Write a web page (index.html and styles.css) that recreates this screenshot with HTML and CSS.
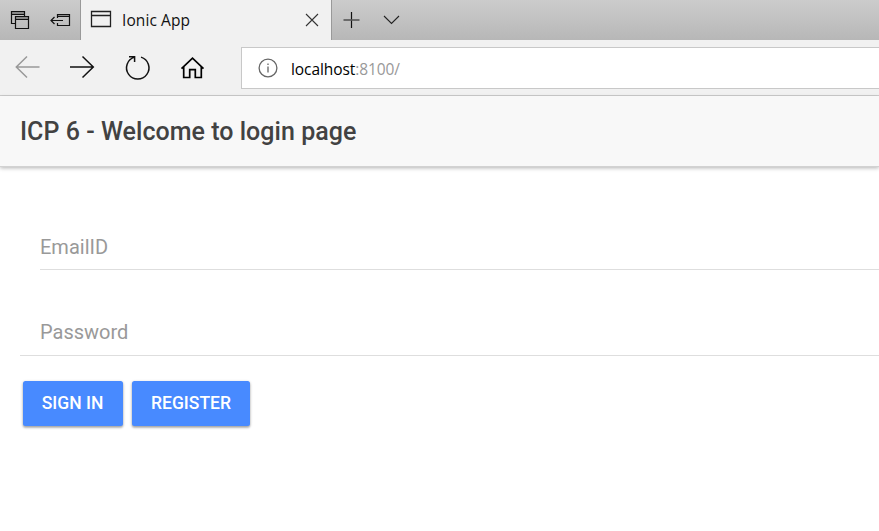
FILE: index.html
```html
<!DOCTYPE html>
<html lang="en">
<head>
<meta charset="utf-8">
<title>Ionic App</title>
<link rel="stylesheet" href="styles.css">
</head>
<body>
<div class="tabs">
  <div class="tab-tools">
    <svg class="icon" width="80" height="40" viewBox="0 0 80 40">
      <path class="shade" d="M12 13H24M16 18H28"/>
      <path d="M15 23.500H11.500V11.500H24.500V16M11.500 14.500H24.500"/>
      <path d="M15.500 16.500H28.500V28.500H15.500ZM15.500 19.500H28.500"/>
      <path class="shade" d="M57 15.500H69"/>
      <path d="M57.500 18V14.500H69.500V25.500H57.500V23M57.500 16.500H69.500M51 20.500H63M54.500 17L51 20.500L54.500 24"/>
    </svg>
  </div>
  <div class="tab">
    <svg class="icon frame-icon" width="20" height="17" viewBox="0 0 20 17"><path class="frame" d="M.5 .5H19.500V15.500H.5ZM.5 4.500H19.500"/></svg>
    <span class="tab-title">Ionic App</span>
    <svg class="icon close" width="14" height="14" viewBox="0 0 14 14"><path d="M1 1L13 13M13 1L1 13"/></svg>
  </div>
  <svg class="icon" width="80" height="40" viewBox="0 0 80 40"><path d="M19.500 12V28"/><path class="mid" d="M11.500 20H27.500"/><path class="thin" d="M52 16L59.500 23.500L67 16"/></svg>
</div>
<div class="nav">
  <svg class="icon nav-icons" width="241" height="55" viewBox="0 0 241 55">
    <path class="back" d="M39.500 27H16M27 16.500L16.300 27L27 37.500"/>
    <path class="bold" d="M70 27H93.500M82.500 16.500L93.300 27L82.500 37.500"/>
    <path class="bold" d="M141 17.100A11.200 11.200 0 1 1 134.500 17.100M129 16.700H134.600V22"/>
    <path class="home" d="M181.500 28.600L192.500 18.100L203.500 28.600M183.700 27V37.500H189.700V29.700H195.300V37.500H201.300V27"/>
  </svg>
  <div class="address">
    <svg class="info" width="20" height="20" viewBox="0 0 20 20"><circle cx="10" cy="10" r="8.900"/><path d="M10 8.500V14.500M10 5.500V7"/></svg>
    <span class="host">localhost</span><span class="port">:8100/</span>
  </div>
</div>
<header class="header"><h1>ICP 6 - Welcome to login page</h1></header>
<main class="content">
  <div class="field"><input type="text" placeholder="EmailID"></div>
  <div class="field last"><input type="password" placeholder="Password"></div>
  <div class="buttons"><button class="sign-in">SIGN IN</button><button class="register">REGISTER</button></div>
</main>
</body>
</html>
```
FILE: styles.css
```css
* { box-sizing: border-box; }
body { margin: 0; height: 531px; overflow: hidden; background: #fff; font-family: Roboto, sans-serif; }
svg { display: block; flex: none; fill: none; }
.icon { stroke: #111; stroke-width: 1.2; }
.shade { stroke: #888; stroke-width: 2; }
.frame { stroke: #222; stroke-width: 1.3; }
.frame-icon { overflow: visible; }
.mid { stroke: #555; stroke-width: 1.6; }
.thin { stroke: #222; stroke-width: 1.1; }
.back { stroke: #999; stroke-width: 1.5; }
.bold { stroke: #111; stroke-width: 1.5; }
.home { stroke: #000; stroke-width: 1.7; }

.tabs { display: flex; height: 40px; background: linear-gradient(#cccccc, #b7b7b7); }
.tab-tools { width: 80px; }
.tab { display: flex; align-items: center; width: 252px; padding: 0 12px 0 10px; background: #f1f1f1; border-left: 1px solid #999; border-right: 1px solid #999; }
.frame-icon { margin-top: -1px; }
.tab-title { margin-left: 11px; font: 15.500px/20px "Open Sans", sans-serif; letter-spacing: .08px; color: #111; }
.close { margin-left: auto; stroke: #333; stroke-width: 1.1; }

.nav { display: flex; height: 56px; background: #f1f1f1; border-bottom: 1px solid #ccc; }
.address { display: flex; align-items: center; flex: 1; height: 42px; margin-top: 7px; padding-left: 16px; background: #fff; border: 1px solid #c8c8c8; border-right: 0; font: 15.500px/20px "Open Sans", sans-serif; letter-spacing: -.08px; }
.address span { padding-top: 1px; }
.info { margin-right: 13px; stroke: #666; stroke-width: 1.3; }
.host { color: #000; }
.port { color: #999; }

.header { display: flex; align-items: center; height: 70px; padding: 2px 0 0 20px; background: #f8f8f8; box-shadow: 0 1px 0 #d2d2d2, 0 2px 4px rgba(0,0,0,.3); }
.header h1 { margin: 0; font-size: 25px; font-weight: 500; line-height: 30px; letter-spacing: .03px; color: #424242; }

.content { padding: 44px 0 0 20px; }
.field { height: 60px; margin-left: 20px; border-bottom: 1px solid #dedede; }
.field.last { height: 61px; margin: 25px 0 0; padding-left: 20px; }
.field input { display: block; width: 100%; height: 100%; margin: 0; padding: 15px 0 0; border: 0; outline: 0; background: transparent; font: 20px/24px Roboto, sans-serif; }
.field.last input { padding-top: 13px; }
.field input::placeholder { color: #999; opacity: 1; }
.buttons { display: flex; gap: 9px; margin: 25px 0 0 3px; }
.buttons button { height: 45px; padding: 0 0 2px; border: 0; border-radius: 2.5px; background: #488aff; color: #fff; font: 500 17.500px/20px Roboto, sans-serif; box-shadow: 0 2px 2px rgba(0,0,0,.16), 0 1px 3px rgba(0,0,0,.3); }
.buttons .sign-in { width: 100px; padding-right: 1px; }
.register { width: 118px; }
```
